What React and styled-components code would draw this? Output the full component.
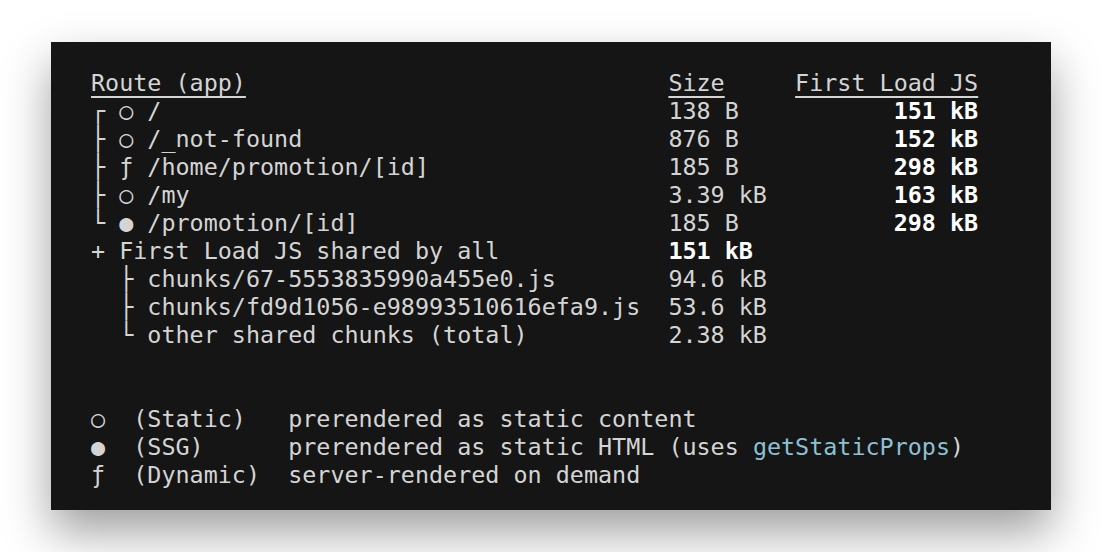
import React from 'react';
import styled, { createGlobalStyle } from 'styled-components';

const GlobalStyle = createGlobalStyle`
  body {
    margin: 0;
    background: #ffffff;
  }
`;

const Page = styled.div`
  padding: 42px 51px;
`;

const Terminal = styled.div`
  width: 1000px;
  height: 468px;
  box-sizing: border-box;
  padding: 27px 40px 21px;
  background: #151515;
  box-shadow: 0 22px 44px rgba(0, 0, 0, 0.38);
  color: #d4d4d4;
  font-family: "DejaVu Sans Mono", "Liberation Mono", monospace;
  font-size: 23.4px;
  line-height: 28px;
`;

const Line = styled.div`
  display: grid;
  grid-template-columns: 41ch 9ch 13ch;
  height: 28px;
  white-space: pre;
`;

const Cell = styled.span`
  text-align: ${p => (p.$right ? 'right' : 'left')};
  font-weight: ${p => (p.$bold ? 'bold' : 'normal')};
  color: ${p => (p.$bold ? '#ffffff' : 'inherit')};
`;

const Head = styled.span`
  text-decoration: underline;
  text-decoration-thickness: 1.5px;
  text-underline-offset: 5px;
`;

const Blank = styled.div`
  height: 28px;
`;

const Legend = styled.div`
  height: 28px;
  white-space: pre;
`;

const Accent = styled.span`
  color: #8cc0d2;
`;

const routes = [
  ['┌ ○ /', '138 B', '151 kB'],
  ['├ ○ /_not-found', '876 B', '152 kB'],
  ['├ ƒ /home/promotion/[id]', '185 B', '298 kB'],
  ['├ ○ /my', '3.39 kB', '163 kB'],
  ['└ ● /promotion/[id]', '185 B', '298 kB'],
];

const chunks = [
  ['  ├ chunks/67-5553835990a455e0.js', '94.6 kB'],
  ['  ├ chunks/fd9d1056-e98993510616efa9.js', '53.6 kB'],
  ['  └ other shared chunks (total)', '2.38 kB'],
];

export default function App() {
  return (
    <Page>
      <GlobalStyle />
      <Terminal>
        <Line>
          <Cell><Head>Route (app)</Head></Cell>
          <Cell><Head>Size</Head></Cell>
          <Cell $right><Head>First Load JS</Head></Cell>
        </Line>
        {routes.map(([path, size, first]) => (
          <Line key={path}>
            <Cell>{path}</Cell>
            <Cell>{size}</Cell>
            <Cell $right $bold>{first}</Cell>
          </Line>
        ))}
        <Line>
          <Cell>+ First Load JS shared by all</Cell>
          <Cell $bold>151 kB</Cell>
          <Cell />
        </Line>
        {chunks.map(([name, size]) => (
          <Line key={name}>
            <Cell>{name}</Cell>
            <Cell>{size}</Cell>
            <Cell />
          </Line>
        ))}
        <Blank />
        <Blank />
        <Legend>○  (Static)   prerendered as static content</Legend>
        <Legend>●  (SSG)      prerendered as static HTML (uses <Accent>getStaticProps</Accent>)</Legend>
        <Legend>ƒ  (Dynamic)  server-rendered on demand</Legend>
      </Terminal>
    </Page>
  );
}
